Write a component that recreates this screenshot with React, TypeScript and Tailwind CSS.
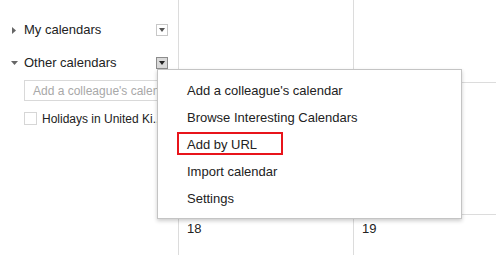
import React from "react";

function DropButton({ pressed }: { pressed?: boolean }) {
  return (
    <span
      className={`flex items-center justify-center w-[12px] h-[12px] border ${
        pressed ? "bg-[#d9d9d9] border-[#8c8c8c]" : "bg-white border-[#c8c8c8]"
      }`}
    >
      <svg width="6" height="4" viewBox="0 0 6 4">
        <path d="M0 0 L6 0 L3 4 Z" fill={pressed ? "#222" : "#555"} />
      </svg>
    </span>
  );
}

function SectionRow({ label, open, pressed }: { label: string; open?: boolean; pressed?: boolean }) {
  return (
    <div className="flex items-center justify-between h-[20px] pl-[11px] pr-[10px]">
      <div className="flex items-center">
        <span className="w-[13px] flex items-center">
          {open ? (
            <svg width="7" height="4" viewBox="0 0 7 4">
              <path d="M0 0 L7 0 L3.5 4 Z" fill="#666" />
            </svg>
          ) : (
            <svg width="4" height="7" viewBox="0 0 4 7" className="ml-[1px]">
              <path d="M0 0 L4 3.5 L0 7 Z" fill="#666" />
            </svg>
          )}
        </span>
        <span className="text-[13px] text-[#222]">{label}</span>
      </div>
      <DropButton pressed={pressed} />
    </div>
  );
}

const menuItems = [
  "Add a colleague's calendar",
  "Browse Interesting Calendars",
  "Add by URL",
  "Import calendar",
  "Settings",
];

export default function App() {
  return (
    <div className="relative w-[496px] h-[255px] overflow-hidden bg-white flex font-['Liberation_Sans',Arial,sans-serif]">
      <aside className="w-[178px] shrink-0 pt-[20px] relative z-0">
        <SectionRow label="My calendars" />
        <div className="mt-[13px]">
          <SectionRow label="Other calendars" open pressed />
        </div>
        <div className="mt-[7px] pl-[24px]">
          <div className="w-[146px] h-[21px] border border-[#d9d9d9] flex items-center pl-[8px] whitespace-nowrap">
            <span className="text-[12px] text-[#a8a8a8]">Add a colleague's calendar</span>
          </div>
        </div>
        <div className="mt-[8px] pl-[24px] flex items-center h-[19px]">
          <span className="w-[13px] h-[13px] border border-[#d6d6d6] shrink-0" />
          <span className="ml-[5px] text-[12px] text-[#222] whitespace-nowrap">Holidays in United Ki...</span>
        </div>
      </aside>

      <div className="flex-1 border-l border-[#dcdcdc] grid grid-cols-[175px_175px_1fr] grid-rows-[83px_132px_1fr]">
        <div className="border-r border-b border-[#dcdcdc]" />
        <div className="border-r border-b border-[#dcdcdc]" />
        <div className="border-b border-[#dcdcdc]" />
        <div className="border-r border-b border-[#dcdcdc]" />
        <div className="border-r border-b border-[#dcdcdc]" />
        <div className="border-b border-[#dcdcdc]" />
        <div className="border-r border-[#dcdcdc] pl-[8px] pt-[4px] text-[13px] text-[#222]">18</div>
        <div className="border-r border-[#dcdcdc] pl-[8px] pt-[4px] text-[13px] text-[#222]">19</div>
        <div />
      </div>

      <div className="absolute z-10 left-[157px] top-[69px] w-[305px] h-[150px] bg-white border border-[#c4c4c4] shadow-[0_2px_4px_rgba(0,0,0,0.2)] pt-[7px]">
        {menuItems.map((item) => (
          <div key={item} className="relative h-[27px] flex items-center pl-[29px] text-[13px] text-[#222] whitespace-nowrap">
            {item}
            {item === "Add by URL" && (
              <span className="absolute left-[19px] top-[1px] w-[106px] h-[23px] border-2 border-[#e8141b]" />
            )}
          </div>
        ))}
      </div>
    </div>
  );
}
